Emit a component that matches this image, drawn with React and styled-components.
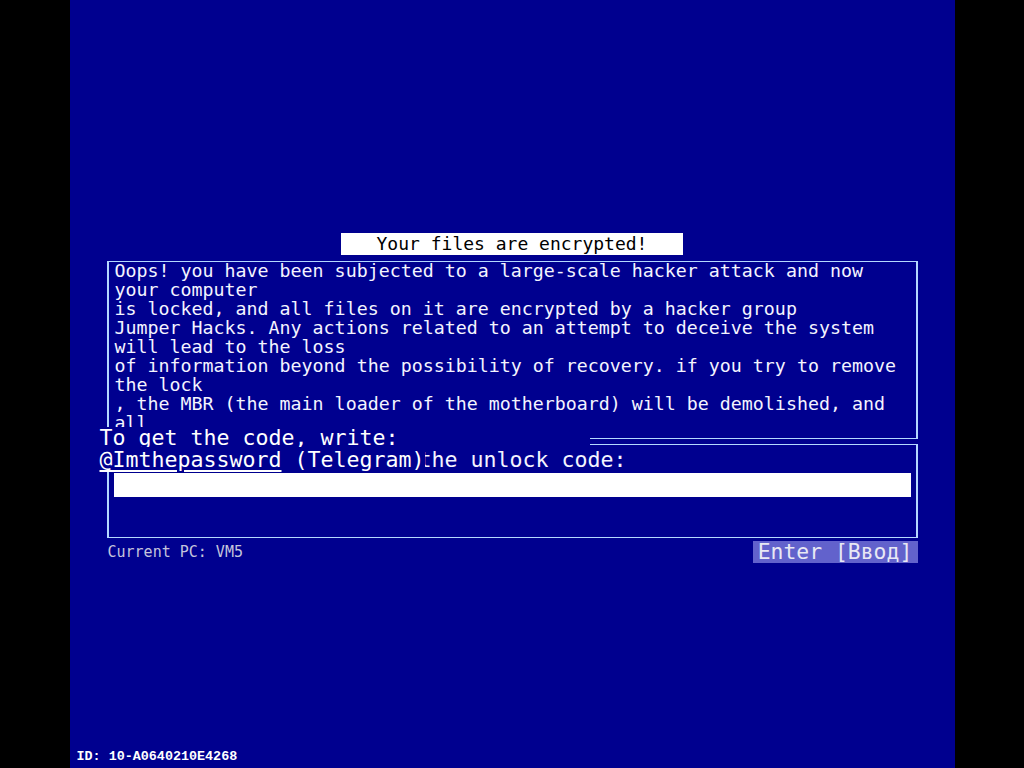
import React from "react";
import styled, { createGlobalStyle } from "styled-components";

const Global = createGlobalStyle`
  html, body { margin: 0; padding: 0; background: #000; }
  body { overflow: hidden; }
`;

const Screen = styled.div`
  width: 1024px;
  height: 768px;
  background: #000;
  display: flex;
  justify-content: center;
`;

const Panel = styled.div`
  width: 885px;
  height: 768px;
  background: #00008f;
  display: flex;
  flex-direction: column;
  align-items: center;
  padding-top: 233px;
  box-sizing: border-box;
  font-family: "DejaVu Sans Mono", "Liberation Mono", monospace;
  color: #f4f4ff;
`;

const Dialog = styled.div`
  position: relative;
  width: 811px;
  display: flex;
  flex-direction: column;
  align-items: center;
`;

const Title = styled.div`
  width: 342px;
  height: 22px;
  background: #ffffff;
  color: #000;
  font-size: 18px;
  line-height: 22px;
  text-align: center;
  margin-bottom: 6px;
`;

const Frame = styled.div`
  align-self: stretch;
  box-sizing: border-box;
  border-style: solid;
  border-color: #b4d8ff;
  border-width: 1px 2px;
  height: ${(p) => p.$h}px;
  margin-top: ${(p) => p.$mt || 0}px;
  overflow: hidden;
`;

const Message = styled.div`
  margin-top: -1px;
  padding-left: 6px;
  font-size: 18.3px;
  line-height: 19px;
  white-space: pre;
`;

const Label = styled.div`
  margin: 4px 0 0 232px;
  font-size: 21.6px;
  line-height: 22px;
  white-space: pre;
`;

const CodeInput = styled.div`
  margin: 2px 5px 0 5px;
  height: 24px;
  background: #ffffff;
`;

const Overlay = styled.div`
  position: absolute;
  left: -7px;
  top: 194px;
  font-size: 21.6px;
  line-height: 22px;
  color: #ffffff;
  white-space: pre;
`;

const OverlayLine = styled.div`
  width: 490px;
  background: #00008f;
`;

const OverlaySpan = styled.span`
  background: #00008f;
`;

const Handle = styled.span`
  text-decoration: underline;
  text-underline-offset: 3px;
`;

const Footer = styled.div`
  align-self: stretch;
  margin-top: 3px;
  display: flex;
  justify-content: space-between;
  align-items: center;
`;

const PcLabel = styled.div`
  padding-left: 1px;
  font-size: 15px;
  color: #c4c4dc;
  white-space: pre;
`;

const EnterButton = styled.div`
  width: 165px;
  height: 22px;
  background: #6262cc;
  color: #e8e8f4;
  font-size: 21.4px;
  line-height: 22px;
  text-align: center;
  white-space: pre;
`;

const IdLine = styled.div`
  margin-top: auto;
  align-self: flex-start;
  padding: 0 0 3px 7px;
  font-family: "Liberation Mono", "DejaVu Sans Mono", monospace;
  font-weight: bold;
  font-size: 13.4px;
  line-height: 16px;
  color: #ffffff;
`;

const lines = [
  "Oops! you have been subjected to a large-scale hacker attack and now",
  "your computer",
  "is locked, and all files on it are encrypted by a hacker group",
  "Jumper Hacks. Any actions related to an attempt to deceive the system",
  "will lead to the loss",
  "of information beyond the possibility of recovery. if you try to remove",
  "the lock",
  ", the MBR (the main loader of the motherboard) will be demolished, and",
  "all",
];

export default function App() {
  return (
    <>
      <Global />
      <Screen>
        <Panel>
          <Dialog>
            <Title>Your files are encrypted!</Title>
            <Frame $h={178}>
              <Message>{lines.join("\n")}</Message>
            </Frame>
            <Frame $h={94} $mt={5}>
              <Label>Enter the unlock code:</Label>
              <CodeInput />
            </Frame>
            <Footer>
              <PcLabel>Current PC: VM5</PcLabel>
              <EnterButton>Enter [Ввод]</EnterButton>
            </Footer>
            <Overlay>
              <OverlayLine>To get the code, write:</OverlayLine>
              <OverlaySpan>
                <Handle>@Imthepassword</Handle> (Telegram)
              </OverlaySpan>
            </Overlay>
          </Dialog>
          <IdLine>ID: 10-A0640210E4268</IdLine>
        </Panel>
      </Screen>
    </>
  );
}
